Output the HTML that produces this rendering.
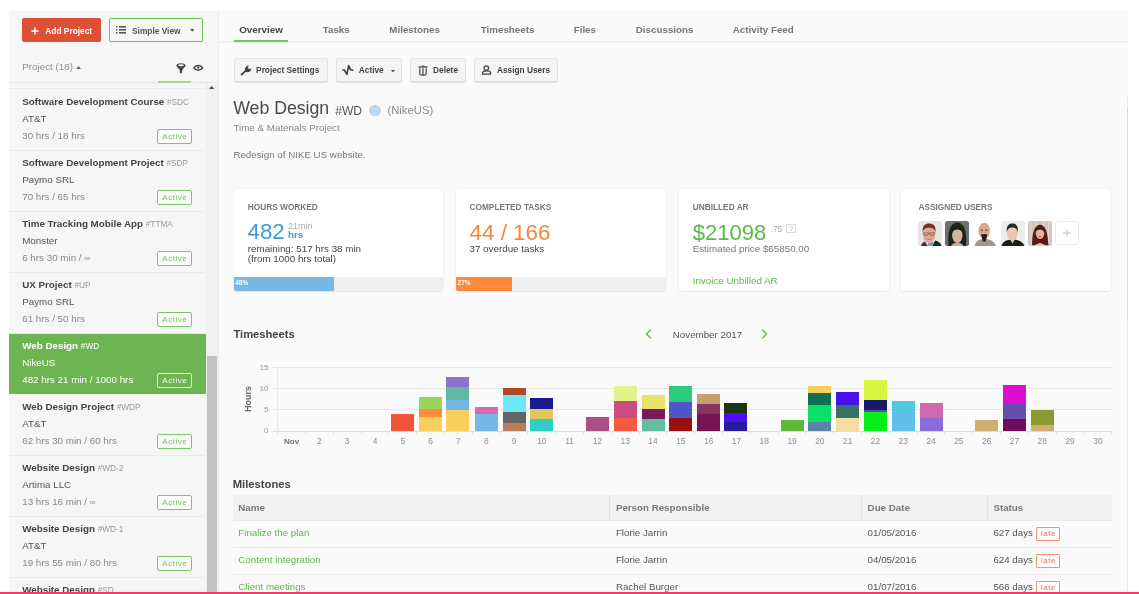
<!DOCTYPE html>
<html><head><meta charset="utf-8"><title>Paymo</title>
<style>
html,body{margin:0;padding:0;width:1139px;height:594px;overflow:hidden;background:#fff;}
body{position:relative;font-family:'Liberation Sans', sans-serif;}
#root{position:absolute;left:0;top:0;width:1139px;height:594px;will-change:transform;}
.t{position:absolute;white-space:nowrap;font-family:'Liberation Sans', sans-serif;}
</style></head><body><div id="root">
<div style="position:absolute;left:9.00px;top:11.00px;width:210.00px;height:583.00px;background:#f6f6f6;"></div>
<div style="position:absolute;left:218.00px;top:11.00px;width:1.00px;height:583.00px;background:#ececec;"></div>
<div style="position:absolute;left:22.00px;top:18.00px;width:79.00px;height:24.00px;background:#dd5035;border-radius:2px;"></div>
<svg style="position:absolute;left:30.5px;top:26.5px" width="8" height="8"><path d="M4 0.5V7.5M0.5 4H7.5" stroke="#fff" stroke-width="1.6"/></svg>
<div class="t" style="left:45.30px;top:26.50px;font-size:8.35px;line-height:8.35px;color:#fff;font-weight:bold;">Add Project</div>
<div style="position:absolute;left:108.50px;top:18.00px;width:94.50px;height:23.50px;box-sizing:border-box;border:1.8px solid #6ec254;border-radius:2px;background:#f7f7f7;"></div>
<svg style="position:absolute;left:115.5px;top:26px" width="11" height="8"><g fill="#555"><rect x="0" y="0" width="1.5" height="1.5"/><rect x="0" y="3" width="1.5" height="1.5"/><rect x="0" y="6" width="1.5" height="1.5"/><rect x="3" y="0" width="7" height="1.6"/><rect x="3" y="3" width="7" height="1.6"/><rect x="3" y="6" width="7" height="1.6"/></g></svg>
<div class="t" style="left:132.00px;top:26.50px;font-size:8.35px;line-height:8.35px;color:#555;font-weight:bold;">Simple View</div>
<svg style="position:absolute;left:189.8px;top:29.2px" width="4.5" height="3"><path d="M0 0H4.5L2.25 2.8Z" fill="#555"/></svg>
<div class="t" style="left:22.30px;top:61.97px;font-size:9.8px;line-height:9.8px;color:#8c8c8c;font-weight:normal;">Project (18)</div>
<svg style="position:absolute;left:76px;top:66px" width="5" height="3"><path d="M0 3H5L2.5 0Z" fill="#666"/></svg>
<svg style="position:absolute;left:175.5px;top:62.5px" width="10" height="11"><path d="M0.4 2.6C0.4 -0.4 9.6 -0.4 9.6 2.6C9.6 3.8 7.2 5.5 6.4 6.8L5.8 10.2L4 10.6L3.6 6.8C2.8 5.5 0.4 3.8 0.4 2.6Z" fill="#454242"/><ellipse cx="5" cy="2.3" rx="2.9" ry="0.95" fill="#f6f6f6"/></svg>
<svg style="position:absolute;left:193.2px;top:64.4px" width="10.4" height="7.6"><path d="M0.8 3.8C2.8 0.7 7.6 0.7 9.6 3.8C7.6 6.9 2.8 6.9 0.8 3.8Z" fill="none" stroke="#454242" stroke-width="1.5"/><circle cx="5.2" cy="3.7" r="1.1" fill="#454242"/></svg>
<div style="position:absolute;left:9.00px;top:81.60px;width:209.00px;height:1.60px;background:#e6e6e6;"></div>
<div style="position:absolute;left:157.60px;top:81.00px;width:33.40px;height:2.10px;background:#a9d59b;"></div>
<div style="position:absolute;left:9.00px;top:88.40px;width:197.00px;height:1.00px;background:#ececec;"></div>
<div style="position:absolute;left:206.00px;top:84.00px;width:12.00px;height:510.00px;background:#f0f0f0;"></div>
<svg style="position:absolute;left:209.4px;top:86.0px" width="5.4" height="3"><path d="M0 3H5.4L2.7 0Z" fill="#505050"/></svg>
<div style="position:absolute;left:207.00px;top:356.30px;width:10.00px;height:240.00px;background:#c1c1c1;"></div>
<div style="position:absolute;left:9.00px;top:149.90px;width:195.70px;height:1.00px;background:#e9e9e9;"></div>
<div class="t" style="left:22.20px;top:97.47px;font-size:9.8px;line-height:9.8px;color:#444;font-weight:bold;">Software Development Course <span style="font-weight:normal;font-size:8.25px;color:#999">#SDC</span></div>
<div class="t" style="left:22.20px;top:114.07px;font-size:9.8px;line-height:9.8px;color:#555;font-weight:normal;">AT&amp;T</div>
<div class="t" style="left:22.20px;top:131.17px;font-size:9.8px;line-height:9.8px;color:#888;font-weight:normal;">30 hrs / 18 hrs</div>
<div style="position:absolute;left:157.3px;top:128.90px;width:34.4px;height:14.8px;box-sizing:border-box;border:1.2px solid #7cc764;border-radius:2px;color:#72c35a;background:#fbfbfb;font:8px/14px 'Liberation Sans', sans-serif;font-weight:normal;text-align:center;letter-spacing:0.5px;text-indent:0.5px">Active</div>
<div style="position:absolute;left:9.00px;top:210.90px;width:195.70px;height:1.00px;background:#e9e9e9;"></div>
<div class="t" style="left:22.20px;top:158.47px;font-size:9.8px;line-height:9.8px;color:#444;font-weight:bold;">Software Development Project <span style="font-weight:normal;font-size:8.25px;color:#999">#SDP</span></div>
<div class="t" style="left:22.20px;top:175.07px;font-size:9.8px;line-height:9.8px;color:#555;font-weight:normal;">Paymo SRL</div>
<div class="t" style="left:22.20px;top:192.17px;font-size:9.8px;line-height:9.8px;color:#888;font-weight:normal;">70 hrs / 65 hrs</div>
<div style="position:absolute;left:157.3px;top:189.90px;width:34.4px;height:14.8px;box-sizing:border-box;border:1.2px solid #7cc764;border-radius:2px;color:#72c35a;background:#fbfbfb;font:8px/14px 'Liberation Sans', sans-serif;font-weight:normal;text-align:center;letter-spacing:0.5px;text-indent:0.5px">Active</div>
<div style="position:absolute;left:9.00px;top:271.90px;width:195.70px;height:1.00px;background:#e9e9e9;"></div>
<div class="t" style="left:22.20px;top:219.47px;font-size:9.8px;line-height:9.8px;color:#444;font-weight:bold;">Time Tracking Mobile App <span style="font-weight:normal;font-size:8.25px;color:#999">#TTMA</span></div>
<div class="t" style="left:22.20px;top:236.07px;font-size:9.8px;line-height:9.8px;color:#555;font-weight:normal;">Monster</div>
<div class="t" style="left:22.20px;top:253.17px;font-size:9.8px;line-height:9.8px;color:#888;font-weight:normal;">6 hrs 30 min / <span style="font-size:8.3px">&#8734;</span></div>
<div style="position:absolute;left:157.3px;top:250.90px;width:34.4px;height:14.8px;box-sizing:border-box;border:1.2px solid #7cc764;border-radius:2px;color:#72c35a;background:#fbfbfb;font:8px/14px 'Liberation Sans', sans-serif;font-weight:normal;text-align:center;letter-spacing:0.5px;text-indent:0.5px">Active</div>
<div style="position:absolute;left:9.00px;top:332.90px;width:195.70px;height:1.00px;background:#e9e9e9;"></div>
<div class="t" style="left:22.20px;top:280.47px;font-size:9.8px;line-height:9.8px;color:#444;font-weight:bold;">UX Project <span style="font-weight:normal;font-size:8.25px;color:#999">#UP</span></div>
<div class="t" style="left:22.20px;top:297.07px;font-size:9.8px;line-height:9.8px;color:#555;font-weight:normal;">Paymo SRL</div>
<div class="t" style="left:22.20px;top:314.17px;font-size:9.8px;line-height:9.8px;color:#888;font-weight:normal;">61 hrs / 50 hrs</div>
<div style="position:absolute;left:157.3px;top:311.90px;width:34.4px;height:14.8px;box-sizing:border-box;border:1.2px solid #7cc764;border-radius:2px;color:#72c35a;background:#fbfbfb;font:8px/14px 'Liberation Sans', sans-serif;font-weight:normal;text-align:center;letter-spacing:0.5px;text-indent:0.5px">Active</div>
<div style="position:absolute;left:9.00px;top:333.70px;width:196.70px;height:59.90px;background:#6cb552;"></div>
<div class="t" style="left:22.20px;top:341.47px;font-size:9.8px;line-height:9.8px;color:#fff;font-weight:bold;">Web Design <span style="font-weight:normal;font-size:8.25px;color:#fff">#WD</span></div>
<div class="t" style="left:22.20px;top:358.07px;font-size:9.8px;line-height:9.8px;color:#fff;font-weight:normal;">NikeUS</div>
<div class="t" style="left:22.20px;top:375.17px;font-size:9.8px;line-height:9.8px;color:#fff;font-weight:normal;">482 hrs 21 min / 1000 hrs</div>
<div style="position:absolute;left:157.3px;top:372.90px;width:34.4px;height:14.8px;box-sizing:border-box;border:1.2px solid #e4f2dc;border-radius:2px;color:#f4faf0;background:transparent;font:8px/14px 'Liberation Sans', sans-serif;font-weight:normal;text-align:center;letter-spacing:0.5px;text-indent:0.5px">Active</div>
<div style="position:absolute;left:9.00px;top:454.90px;width:195.70px;height:1.00px;background:#e9e9e9;"></div>
<div class="t" style="left:22.20px;top:402.47px;font-size:9.8px;line-height:9.8px;color:#444;font-weight:bold;">Web Design Project <span style="font-weight:normal;font-size:8.25px;color:#999">#WDP</span></div>
<div class="t" style="left:22.20px;top:419.07px;font-size:9.8px;line-height:9.8px;color:#555;font-weight:normal;">AT&amp;T</div>
<div class="t" style="left:22.20px;top:436.17px;font-size:9.8px;line-height:9.8px;color:#888;font-weight:normal;">62 hrs 30 min / 60 hrs</div>
<div style="position:absolute;left:157.3px;top:433.90px;width:34.4px;height:14.8px;box-sizing:border-box;border:1.2px solid #7cc764;border-radius:2px;color:#72c35a;background:#fbfbfb;font:8px/14px 'Liberation Sans', sans-serif;font-weight:normal;text-align:center;letter-spacing:0.5px;text-indent:0.5px">Active</div>
<div style="position:absolute;left:9.00px;top:515.90px;width:195.70px;height:1.00px;background:#e9e9e9;"></div>
<div class="t" style="left:22.20px;top:463.47px;font-size:9.8px;line-height:9.8px;color:#444;font-weight:bold;">Website Design <span style="font-weight:normal;font-size:8.25px;color:#999">#WD-2</span></div>
<div class="t" style="left:22.20px;top:480.07px;font-size:9.8px;line-height:9.8px;color:#555;font-weight:normal;">Artima LLC</div>
<div class="t" style="left:22.20px;top:497.17px;font-size:9.8px;line-height:9.8px;color:#888;font-weight:normal;">13 hrs 16 min / <span style="font-size:8.3px">&#8734;</span></div>
<div style="position:absolute;left:157.3px;top:494.90px;width:34.4px;height:14.8px;box-sizing:border-box;border:1.2px solid #7cc764;border-radius:2px;color:#72c35a;background:#fbfbfb;font:8px/14px 'Liberation Sans', sans-serif;font-weight:normal;text-align:center;letter-spacing:0.5px;text-indent:0.5px">Active</div>
<div style="position:absolute;left:9.00px;top:576.90px;width:195.70px;height:1.00px;background:#e9e9e9;"></div>
<div class="t" style="left:22.20px;top:524.47px;font-size:9.8px;line-height:9.8px;color:#444;font-weight:bold;">Website Design <span style="font-weight:normal;font-size:8.25px;color:#999">#WD-1</span></div>
<div class="t" style="left:22.20px;top:541.07px;font-size:9.8px;line-height:9.8px;color:#555;font-weight:normal;">AT&amp;T</div>
<div class="t" style="left:22.20px;top:558.17px;font-size:9.8px;line-height:9.8px;color:#888;font-weight:normal;">19 hrs 55 min / 80 hrs</div>
<div style="position:absolute;left:157.3px;top:555.90px;width:34.4px;height:14.8px;box-sizing:border-box;border:1.2px solid #7cc764;border-radius:2px;color:#72c35a;background:#fbfbfb;font:8px/14px 'Liberation Sans', sans-serif;font-weight:normal;text-align:center;letter-spacing:0.5px;text-indent:0.5px">Active</div>
<div style="position:absolute;left:9.00px;top:637.90px;width:195.70px;height:1.00px;background:#e9e9e9;"></div>
<div class="t" style="left:22.20px;top:585.47px;font-size:9.8px;line-height:9.8px;color:#444;font-weight:bold;">Website Design <span style="font-weight:normal;font-size:8.25px;color:#999">#SD</span></div>
<div style="position:absolute;left:219.00px;top:11.00px;width:909.00px;height:583.00px;background:#fafafa;"></div>
<div style="position:absolute;left:1126.50px;top:95.60px;width:1.50px;height:498.40px;background:#eeeeee;"></div>
<div style="position:absolute;left:1126.50px;top:106.80px;width:1.50px;height:212.60px;background:#d9d9d9;"></div>
<div style="position:absolute;left:219.00px;top:41.00px;width:909.00px;height:1.60px;background:#efefef;"></div>
<div class="t" style="left:239.20px;top:25.47px;font-size:9.8px;line-height:9.8px;color:#444;font-weight:bold;">Overview</div>
<div class="t" style="left:322.70px;top:25.47px;font-size:9.8px;line-height:9.8px;color:#777;font-weight:bold;">Tasks</div>
<div class="t" style="left:389.30px;top:25.47px;font-size:9.8px;line-height:9.8px;color:#777;font-weight:bold;">Milestones</div>
<div class="t" style="left:480.70px;top:25.47px;font-size:9.8px;line-height:9.8px;color:#777;font-weight:bold;">Timesheets</div>
<div class="t" style="left:573.70px;top:25.47px;font-size:9.8px;line-height:9.8px;color:#777;font-weight:bold;">Files</div>
<div class="t" style="left:635.80px;top:25.47px;font-size:9.8px;line-height:9.8px;color:#777;font-weight:bold;">Discussions</div>
<div class="t" style="left:732.80px;top:25.47px;font-size:9.8px;line-height:9.8px;color:#777;font-weight:bold;">Activity Feed</div>
<div style="position:absolute;left:234.30px;top:40.00px;width:53.40px;height:2.10px;background:#74c35c;"></div>
<div style="position:absolute;left:233.50px;top:58.30px;width:94.10px;height:23.70px;box-sizing:border-box;background:#f4f4f4;border:1px solid #e4e4e4;border-radius:2px;box-shadow:0 1px 0 #e0e0e0;"></div>
<div class="t" style="left:256.10px;top:66.34px;font-size:8.3px;line-height:8.3px;color:#444;font-weight:bold;">Project Settings</div>
<svg style="position:absolute;left:239.5px;top:63.5px" width="12" height="12"><path d="M1.6 10.6L5.8 6.6" stroke="#454242" stroke-width="1.9" stroke-linecap="round"/><path d="M5.2 7.2C4.4 5.2 5.4 2.2 8.3 1.6L8.7 1.8L7.7 3.7L9.3 5.3L11.2 4.5C11.5 7 8.8 8.9 6.3 8.1Z" fill="#454242"/></svg>
<div style="position:absolute;left:335.80px;top:58.30px;width:66.00px;height:23.70px;box-sizing:border-box;background:#f4f4f4;border:1px solid #e4e4e4;border-radius:2px;box-shadow:0 1px 0 #e0e0e0;"></div>
<div class="t" style="left:358.80px;top:66.34px;font-size:8.3px;line-height:8.3px;color:#444;font-weight:bold;">Active</div>
<svg style="position:absolute;left:342px;top:64px" width="12" height="12"><path d="M0.8 6H2.4L5 10.4L6.6 1.6L8.6 5.8L10.8 6.3" fill="none" stroke="#454242" stroke-width="1.6" stroke-linejoin="round" stroke-linecap="round"/></svg><svg style="position:absolute;left:390.8px;top:69.6px" width="4" height="2.5"><path d="M0 0H4L2 2.5Z" fill="#555"/></svg>
<div style="position:absolute;left:409.70px;top:58.30px;width:56.00px;height:23.70px;box-sizing:border-box;background:#f4f4f4;border:1px solid #e4e4e4;border-radius:2px;box-shadow:0 1px 0 #e0e0e0;"></div>
<div class="t" style="left:433.10px;top:66.34px;font-size:8.3px;line-height:8.3px;color:#444;font-weight:bold;">Delete</div>
<svg style="position:absolute;left:417.5px;top:64.5px" width="10.5" height="11"><path d="M0.5 2H9.5" stroke="#454242" stroke-width="1.3"/><path d="M3.6 1.1H6.4" stroke="#454242" stroke-width="1.1"/><path d="M1.8 3.2V8.6Q1.8 10.1 3.4 10.1H6.6Q8.2 10.1 8.2 8.6V3.2M5 3.2V10" fill="none" stroke="#454242" stroke-width="1.2"/></svg>
<div style="position:absolute;left:473.90px;top:58.30px;width:83.90px;height:23.70px;box-sizing:border-box;background:#f4f4f4;border:1px solid #e4e4e4;border-radius:2px;box-shadow:0 1px 0 #e0e0e0;"></div>
<div class="t" style="left:497.00px;top:66.34px;font-size:8.3px;line-height:8.3px;color:#444;font-weight:bold;">Assign Users</div>
<svg style="position:absolute;left:481px;top:64px" width="11" height="11"><circle cx="5.3" cy="4.1" r="2.3" fill="none" stroke="#454242" stroke-width="1.3"/><path d="M1.5 10.2V9C1.5 7.6 3.3 6.9 5.5 6.9C7.7 6.9 9.6 7.6 9.6 9V10.2Z" fill="none" stroke="#454242" stroke-width="1.3" stroke-linejoin="round"/></svg>
<div class="t" style="left:233.20px;top:100.05px;font-size:17.7px;line-height:17.7px;color:#4a4a4a;font-weight:normal;">Web Design</div>
<div class="t" style="left:335.20px;top:104.72px;font-size:12.1px;line-height:12.1px;color:#555;font-weight:normal;">#WD</div>
<div style="position:absolute;left:369.4px;top:104.5px;width:11.2px;height:11.2px;border-radius:50%;background:#bcd6ef"></div>
<div class="t" style="left:387.40px;top:105.19px;font-size:11.3px;line-height:11.3px;color:#8a8a8a;font-weight:normal;">(NikeUS)</div>
<div class="t" style="left:233.40px;top:122.77px;font-size:9.8px;line-height:9.8px;color:#8a8a8a;font-weight:normal;">Time &amp; Materials Project</div>
<div class="t" style="left:233.40px;top:150.01px;font-size:9.75px;line-height:9.75px;color:#777;font-weight:normal;">Redesign of NIKE US website.</div>
<div style="position:absolute;left:233.70px;top:189.00px;width:209.10px;height:101.90px;background:#fff;border-radius:2px;box-shadow:0 0 1.5px rgba(0,0,0,0.13),0 1px 1.5px rgba(0,0,0,0.06);"></div>
<div style="position:absolute;left:456.00px;top:189.00px;width:209.90px;height:101.90px;background:#fff;border-radius:2px;box-shadow:0 0 1.5px rgba(0,0,0,0.13),0 1px 1.5px rgba(0,0,0,0.06);"></div>
<div style="position:absolute;left:678.70px;top:189.00px;width:210.30px;height:101.90px;background:#fff;border-radius:2px;box-shadow:0 0 1.5px rgba(0,0,0,0.13),0 1px 1.5px rgba(0,0,0,0.06);"></div>
<div style="position:absolute;left:900.90px;top:189.00px;width:210.20px;height:101.90px;background:#fff;border-radius:2px;box-shadow:0 0 1.5px rgba(0,0,0,0.13),0 1px 1.5px rgba(0,0,0,0.06);"></div>
<div class="t" style="left:247.80px;top:202.94px;font-size:8.3px;line-height:8.3px;color:#777;font-weight:bold;">HOURS WORKED</div>
<div class="t" style="left:247.50px;top:221.34px;font-size:22.3px;line-height:22.3px;color:#3c9be0;font-weight:normal;">482</div>
<div class="t" style="left:288.00px;top:222.05px;font-size:9.0px;line-height:9.0px;color:#aaa;font-weight:normal;">21min</div>
<div class="t" style="left:288.00px;top:230.30px;font-size:9.77px;line-height:9.77px;color:#3c9be0;font-weight:bold;">hrs</div>
<div class="t" style="left:247.80px;top:243.57px;font-size:9.8px;line-height:9.8px;color:#444;font-weight:normal;">remaining: 517 hrs 38 min</div>
<div class="t" style="left:247.80px;top:254.37px;font-size:9.8px;line-height:9.8px;color:#444;font-weight:normal;">(from 1000 hrs total)</div>
<div style="position:absolute;left:233.70px;top:276.90px;width:209.10px;height:14.00px;background:#eef0f0;border-radius:0 0 2px 2px;"></div>
<div style="position:absolute;left:233.70px;top:276.90px;width:100.30px;height:14.00px;background:#77b9e4;border-radius:0 0 0 2px;"></div>
<div class="t" style="left:235.20px;top:280.48px;font-size:6.5px;line-height:6.5px;color:#fff;font-weight:bold;">48%</div>
<div class="t" style="left:469.50px;top:202.94px;font-size:8.3px;line-height:8.3px;color:#777;font-weight:bold;">COMPLETED TASKS</div>
<div class="t" style="left:469.50px;top:221.86px;font-size:22.4px;line-height:22.4px;color:#f5883a;font-weight:normal;">44 / 166</div>
<div class="t" style="left:469.50px;top:243.57px;font-size:9.8px;line-height:9.8px;color:#444;font-weight:normal;">37 overdue tasks</div>
<div style="position:absolute;left:456.00px;top:276.90px;width:209.90px;height:14.00px;background:#eef0f0;border-radius:0 0 2px 2px;"></div>
<div style="position:absolute;left:456.00px;top:276.90px;width:56.30px;height:14.00px;background:#fd8a3c;border-radius:0 0 0 2px;"></div>
<div class="t" style="left:457.60px;top:280.48px;font-size:6.5px;line-height:6.5px;color:#fff;font-weight:bold;">27%</div>
<div class="t" style="left:692.70px;top:202.94px;font-size:8.3px;line-height:8.3px;color:#777;font-weight:bold;">UNBILLED AR</div>
<div class="t" style="left:692.70px;top:222.22px;font-size:22.1px;line-height:22.1px;color:#5db84a;font-weight:normal;">$21098</div>
<div class="t" style="left:770.60px;top:225.99px;font-size:8.25px;line-height:8.25px;color:#aaa;font-weight:normal;">.75</div>
<div style="position:absolute;left:786.4px;top:223.8px;width:9.5px;height:9px;box-sizing:border-box;border:1px solid #ddd;font:7px/7px 'Liberation Sans', sans-serif;color:#aaa;text-align:center">?</div>
<div class="t" style="left:692.70px;top:243.57px;font-size:9.8px;line-height:9.8px;color:#777;font-weight:normal;">Estimated price $65850.00</div>
<div class="t" style="left:692.70px;top:275.87px;font-size:9.8px;line-height:9.8px;color:#5db84a;font-weight:normal;">Invoice Unbilled AR</div>
<div class="t" style="left:918.40px;top:202.94px;font-size:8.3px;line-height:8.3px;color:#777;font-weight:bold;">ASSIGNED USERS</div>
<svg style="position:absolute;left:918.2px;top:220.6px" width="24" height="25" viewBox="0 0 24 25"><rect width="24" height="25" rx="2.5" fill="#e6e6e6"/><path d="M9 25L11 21H15L16 25Z" fill="#8a98c8"/><path d="M14.5 25L17 19.5C20 20 22.5 21.5 23.5 25Z" fill="#1c2a1c"/><path d="M9.5 25L7 20.5C5 21 3.5 22.5 3 25Z" fill="#3a3a3a"/><ellipse cx="11" cy="13.3" rx="6.2" ry="8.6" fill="#e2a890"/><path d="M4.6 11.5C4 4.2 7.5 2.4 11 2.4C15 2.4 18.2 4.2 17.5 11.5C17 8 14.5 6.8 11 6.8C7.8 6.8 5.2 8 4.6 11.5Z" fill="#6a3428"/><path d="M4.8 12H17.2M5.6 12Q5.6 14.8 8.2 14.8Q10.4 14.8 10.6 12M11.4 12Q11.6 14.8 14 14.8Q16.6 14.8 16.6 12" fill="none" stroke="#94604a" stroke-width="0.9"/><path d="M8.5 17.8Q11 19.5 13.5 17.8" stroke="#c07070" stroke-width="0.8" fill="none"/></svg>
<svg style="position:absolute;left:945.4px;top:220.6px" width="24" height="25" viewBox="0 0 24 25"><rect width="24" height="25" rx="2.5" fill="#6e6e6e"/><path d="M3.5 25C2.5 13 4 2 12.3 1.5C20.5 2 22 13 21 25Z" fill="#1c2616"/><path d="M6 25C7 22.5 9.5 22 12.3 22C15 22 17.5 22.5 18.5 25Z" fill="#b8b0b0"/><ellipse cx="12.3" cy="14.3" rx="5.2" ry="7.8" fill="#d8b2a0"/><path d="M6.8 12.5C7 7 9.5 5.8 12.3 5.8C15.5 5.8 17.8 7.5 18 12.5C16.5 9.2 14 8.4 12.3 8.4C10.5 8.4 8.2 9.2 6.8 12.5Z" fill="#1c2616"/></svg>
<svg style="position:absolute;left:974.0px;top:220.6px" width="24" height="25" viewBox="0 0 24 25"><rect width="24" height="25" rx="2.5" fill="#ffffff"/><path d="M0.5 25C1.5 20.5 5 18 10.5 18C16 18 20.5 20.5 22 25Z" fill="#a4968a"/><path d="M8 16H13V19.5H8Z" fill="#c8987c"/><ellipse cx="10.2" cy="9.6" rx="5.7" ry="7.9" fill="#dca68c"/><path d="M7 13.6Q10.2 12.4 13.4 13.6L12.6 16.5L11.6 20.5H8.8L7.8 16.5Z" fill="#2a2018"/><path d="M6.8 9.2H8.8M11.4 9.2H13.4" stroke="#4a3024" stroke-width="1"/></svg>
<svg style="position:absolute;left:1000.8px;top:220.6px" width="24" height="25" viewBox="0 0 24 25"><rect width="24" height="25" rx="2.5" fill="#eceeee"/><path d="M0.5 25C1.5 20.5 6 18.5 11.5 18.5C17 18.5 21.5 20.5 23.5 25Z" fill="#162014"/><path d="M9 18.3L11.5 22.5L14 18.3Z" fill="#e4c0a8"/><ellipse cx="11.3" cy="12.3" rx="5.4" ry="7.2" fill="#e8c6b0"/><path d="M5.8 11.5C5 4.5 8.2 2.5 11.3 2.5C14.8 2.5 17.5 4.5 16.8 11.5C16.3 7.8 14.2 6.6 11.3 6.6C8.7 6.6 6.4 7.8 5.8 11.5Z" fill="#2a2624"/></svg>
<svg style="position:absolute;left:1027.6px;top:220.6px" width="24" height="25" viewBox="0 0 24 25"><rect width="24" height="25" rx="2.5" fill="#d6c6ba"/><path d="M2.5 0H3.5V25H2.5ZM8 0H9V25H8ZM15 0H16V25H15ZM20 0H21V25H20Z" fill="#e8dcd2"/><path d="M4 24C4.5 15 4.5 5.5 12 3.5C19.5 5 19.5 15 20.5 24C18 25 15 23 12 22C9 23 6 25 4 24Z" fill="#561c1c"/><path d="M8.5 25C9.5 23 10.5 22.5 12 22.5C13.5 22.5 14.5 23 15.5 25Z" fill="#e0cfc4"/><ellipse cx="12" cy="12" rx="4.3" ry="6" fill="#e2b6a2"/><path d="M10.6 15.5H13.2" stroke="#e04030" stroke-width="1.1"/><path d="M7.4 11.5C7.6 7 10 6 12 6C14.5 6 16.4 7.5 16.5 11.5C15 9 13 8.4 12 8.4C10.5 8.4 8.6 9 7.4 11.5Z" fill="#3a1616"/></svg>
<div style="position:absolute;left:1055.1px;top:220.7px;width:24.3px;height:24.8px;box-sizing:border-box;border:1.5px solid #ececec;border-radius:3px;background:#fff"></div>
<svg style="position:absolute;left:1063.1px;top:228.7px" width="8" height="8"><path d="M4 0.2V7.8M0.2 4H7.8" stroke="#d2d2d2" stroke-width="1.3"/></svg>
<div class="t" style="left:233.40px;top:328.88px;font-size:11.2px;line-height:11.2px;color:#444;font-weight:bold;">Timesheets</div>
<svg style="position:absolute;left:645px;top:329px" width="7" height="10"><path d="M5.8 0.8L1.5 5L5.8 9.2" fill="none" stroke="#6cbf4c" stroke-width="1.6"/></svg>
<div class="t" style="left:672.80px;top:329.61px;font-size:9.75px;line-height:9.75px;color:#555;font-weight:normal;">November 2017</div>
<svg style="position:absolute;left:761px;top:329px" width="7" height="10"><path d="M1.2 0.8L5.5 5L1.2 9.2" fill="none" stroke="#6cbf4c" stroke-width="1.6"/></svg>
<div style="position:absolute;left:273.00px;top:409.47px;width:838.80px;height:1.00px;background:#e8e8e8;"></div>
<div style="position:absolute;left:273.00px;top:388.43px;width:838.80px;height:1.00px;background:#e8e8e8;"></div>
<div style="position:absolute;left:273.00px;top:367.40px;width:838.80px;height:1.00px;background:#e8e8e8;"></div>
<div style="position:absolute;left:277.20px;top:367.30px;width:1.00px;height:64.00px;background:#e8e8e8;"></div>
<div style="position:absolute;left:273.00px;top:430.50px;width:838.80px;height:1.30px;background:#dcdcdc;"></div>
<div style="position:absolute;left:277.20px;top:431.30px;width:1.00px;height:3.20px;background:#e2e2e2;"></div>
<div style="position:absolute;left:305.00px;top:431.30px;width:1.00px;height:3.20px;background:#e2e2e2;"></div>
<div style="position:absolute;left:332.81px;top:431.30px;width:1.00px;height:3.20px;background:#e2e2e2;"></div>
<div style="position:absolute;left:360.61px;top:431.30px;width:1.00px;height:3.20px;background:#e2e2e2;"></div>
<div style="position:absolute;left:388.41px;top:431.30px;width:1.00px;height:3.20px;background:#e2e2e2;"></div>
<div style="position:absolute;left:416.22px;top:431.30px;width:1.00px;height:3.20px;background:#e2e2e2;"></div>
<div style="position:absolute;left:444.02px;top:431.30px;width:1.00px;height:3.20px;background:#e2e2e2;"></div>
<div style="position:absolute;left:471.82px;top:431.30px;width:1.00px;height:3.20px;background:#e2e2e2;"></div>
<div style="position:absolute;left:499.63px;top:431.30px;width:1.00px;height:3.20px;background:#e2e2e2;"></div>
<div style="position:absolute;left:527.43px;top:431.30px;width:1.00px;height:3.20px;background:#e2e2e2;"></div>
<div style="position:absolute;left:555.23px;top:431.30px;width:1.00px;height:3.20px;background:#e2e2e2;"></div>
<div style="position:absolute;left:583.04px;top:431.30px;width:1.00px;height:3.20px;background:#e2e2e2;"></div>
<div style="position:absolute;left:610.84px;top:431.30px;width:1.00px;height:3.20px;background:#e2e2e2;"></div>
<div style="position:absolute;left:638.64px;top:431.30px;width:1.00px;height:3.20px;background:#e2e2e2;"></div>
<div style="position:absolute;left:666.45px;top:431.30px;width:1.00px;height:3.20px;background:#e2e2e2;"></div>
<div style="position:absolute;left:694.25px;top:431.30px;width:1.00px;height:3.20px;background:#e2e2e2;"></div>
<div style="position:absolute;left:722.05px;top:431.30px;width:1.00px;height:3.20px;background:#e2e2e2;"></div>
<div style="position:absolute;left:749.86px;top:431.30px;width:1.00px;height:3.20px;background:#e2e2e2;"></div>
<div style="position:absolute;left:777.66px;top:431.30px;width:1.00px;height:3.20px;background:#e2e2e2;"></div>
<div style="position:absolute;left:805.46px;top:431.30px;width:1.00px;height:3.20px;background:#e2e2e2;"></div>
<div style="position:absolute;left:833.27px;top:431.30px;width:1.00px;height:3.20px;background:#e2e2e2;"></div>
<div style="position:absolute;left:861.07px;top:431.30px;width:1.00px;height:3.20px;background:#e2e2e2;"></div>
<div style="position:absolute;left:888.87px;top:431.30px;width:1.00px;height:3.20px;background:#e2e2e2;"></div>
<div style="position:absolute;left:916.68px;top:431.30px;width:1.00px;height:3.20px;background:#e2e2e2;"></div>
<div style="position:absolute;left:944.48px;top:431.30px;width:1.00px;height:3.20px;background:#e2e2e2;"></div>
<div style="position:absolute;left:972.28px;top:431.30px;width:1.00px;height:3.20px;background:#e2e2e2;"></div>
<div style="position:absolute;left:1000.09px;top:431.30px;width:1.00px;height:3.20px;background:#e2e2e2;"></div>
<div style="position:absolute;left:1027.89px;top:431.30px;width:1.00px;height:3.20px;background:#e2e2e2;"></div>
<div style="position:absolute;left:1055.69px;top:431.30px;width:1.00px;height:3.20px;background:#e2e2e2;"></div>
<div style="position:absolute;left:1083.50px;top:431.30px;width:1.00px;height:3.20px;background:#e2e2e2;"></div>
<div style="position:absolute;left:1111.30px;top:431.30px;width:1.00px;height:3.20px;background:#e2e2e2;"></div>
<div class="t" style="right:870.50px;top:427.01px;font-size:8.1px;line-height:8.1px;color:#999;font-weight:normal;">0</div>
<div class="t" style="right:870.50px;top:405.98px;font-size:8.1px;line-height:8.1px;color:#999;font-weight:normal;">5</div>
<div class="t" style="right:870.50px;top:384.95px;font-size:8.1px;line-height:8.1px;color:#999;font-weight:normal;">10</div>
<div class="t" style="right:870.50px;top:363.91px;font-size:8.1px;line-height:8.1px;color:#999;font-weight:normal;">15</div>
<div class="t" style="left:218.3px;top:394.4px;width:60px;height:10px;text-align:center;font-size:8.9px;line-height:10px;font-weight:bold;color:#666;transform:rotate(-90deg)">Hours</div>
<div class="t" style="left:91.60px;width:400px;text-align:center;top:437.51px;font-size:8.1px;line-height:8.1px;color:#707070;font-weight:bold;">Nov</div>
<div class="t" style="left:119.40px;width:400px;text-align:center;top:437.26px;font-size:8.4px;line-height:8.4px;color:#8f8f8f;font-weight:normal;">2</div>
<div class="t" style="left:147.21px;width:400px;text-align:center;top:437.26px;font-size:8.4px;line-height:8.4px;color:#8f8f8f;font-weight:normal;">3</div>
<div class="t" style="left:175.01px;width:400px;text-align:center;top:437.26px;font-size:8.4px;line-height:8.4px;color:#8f8f8f;font-weight:normal;">4</div>
<div class="t" style="left:202.81px;width:400px;text-align:center;top:437.26px;font-size:8.4px;line-height:8.4px;color:#8f8f8f;font-weight:normal;">5</div>
<div class="t" style="left:230.62px;width:400px;text-align:center;top:437.26px;font-size:8.4px;line-height:8.4px;color:#8f8f8f;font-weight:normal;">6</div>
<div class="t" style="left:258.42px;width:400px;text-align:center;top:437.26px;font-size:8.4px;line-height:8.4px;color:#8f8f8f;font-weight:normal;">7</div>
<div class="t" style="left:286.22px;width:400px;text-align:center;top:437.26px;font-size:8.4px;line-height:8.4px;color:#8f8f8f;font-weight:normal;">8</div>
<div class="t" style="left:314.03px;width:400px;text-align:center;top:437.26px;font-size:8.4px;line-height:8.4px;color:#8f8f8f;font-weight:normal;">9</div>
<div class="t" style="left:341.83px;width:400px;text-align:center;top:437.26px;font-size:8.4px;line-height:8.4px;color:#8f8f8f;font-weight:normal;">10</div>
<div class="t" style="left:369.63px;width:400px;text-align:center;top:437.26px;font-size:8.4px;line-height:8.4px;color:#8f8f8f;font-weight:normal;">11</div>
<div class="t" style="left:397.44px;width:400px;text-align:center;top:437.26px;font-size:8.4px;line-height:8.4px;color:#8f8f8f;font-weight:normal;">12</div>
<div class="t" style="left:425.24px;width:400px;text-align:center;top:437.26px;font-size:8.4px;line-height:8.4px;color:#8f8f8f;font-weight:normal;">13</div>
<div class="t" style="left:453.04px;width:400px;text-align:center;top:437.26px;font-size:8.4px;line-height:8.4px;color:#8f8f8f;font-weight:normal;">14</div>
<div class="t" style="left:480.85px;width:400px;text-align:center;top:437.26px;font-size:8.4px;line-height:8.4px;color:#8f8f8f;font-weight:normal;">15</div>
<div class="t" style="left:508.65px;width:400px;text-align:center;top:437.26px;font-size:8.4px;line-height:8.4px;color:#8f8f8f;font-weight:normal;">16</div>
<div class="t" style="left:536.45px;width:400px;text-align:center;top:437.26px;font-size:8.4px;line-height:8.4px;color:#8f8f8f;font-weight:normal;">17</div>
<div class="t" style="left:564.26px;width:400px;text-align:center;top:437.26px;font-size:8.4px;line-height:8.4px;color:#8f8f8f;font-weight:normal;">18</div>
<div class="t" style="left:592.06px;width:400px;text-align:center;top:437.26px;font-size:8.4px;line-height:8.4px;color:#8f8f8f;font-weight:normal;">19</div>
<div class="t" style="left:619.87px;width:400px;text-align:center;top:437.26px;font-size:8.4px;line-height:8.4px;color:#8f8f8f;font-weight:normal;">20</div>
<div class="t" style="left:647.67px;width:400px;text-align:center;top:437.26px;font-size:8.4px;line-height:8.4px;color:#8f8f8f;font-weight:normal;">21</div>
<div class="t" style="left:675.47px;width:400px;text-align:center;top:437.26px;font-size:8.4px;line-height:8.4px;color:#8f8f8f;font-weight:normal;">22</div>
<div class="t" style="left:703.27px;width:400px;text-align:center;top:437.26px;font-size:8.4px;line-height:8.4px;color:#8f8f8f;font-weight:normal;">23</div>
<div class="t" style="left:731.08px;width:400px;text-align:center;top:437.26px;font-size:8.4px;line-height:8.4px;color:#8f8f8f;font-weight:normal;">24</div>
<div class="t" style="left:758.88px;width:400px;text-align:center;top:437.26px;font-size:8.4px;line-height:8.4px;color:#8f8f8f;font-weight:normal;">25</div>
<div class="t" style="left:786.68px;width:400px;text-align:center;top:437.26px;font-size:8.4px;line-height:8.4px;color:#8f8f8f;font-weight:normal;">26</div>
<div class="t" style="left:814.49px;width:400px;text-align:center;top:437.26px;font-size:8.4px;line-height:8.4px;color:#8f8f8f;font-weight:normal;">27</div>
<div class="t" style="left:842.29px;width:400px;text-align:center;top:437.26px;font-size:8.4px;line-height:8.4px;color:#8f8f8f;font-weight:normal;">28</div>
<div class="t" style="left:870.10px;width:400px;text-align:center;top:437.26px;font-size:8.4px;line-height:8.4px;color:#8f8f8f;font-weight:normal;">29</div>
<div class="t" style="left:897.90px;width:400px;text-align:center;top:437.26px;font-size:8.4px;line-height:8.4px;color:#8f8f8f;font-weight:normal;">30</div>
<div style="position:absolute;left:390.90px;top:414.10px;width:23.00px;height:16.90px;background:#f0553a;"></div>
<div style="position:absolute;left:418.60px;top:416.70px;width:23.00px;height:14.30px;background:#f8cf5c;"></div>
<div style="position:absolute;left:418.60px;top:408.60px;width:23.00px;height:8.10px;background:#fd8b3e;"></div>
<div style="position:absolute;left:418.60px;top:397.00px;width:23.00px;height:11.60px;background:#98d45a;"></div>
<div style="position:absolute;left:446.40px;top:409.70px;width:23.00px;height:21.30px;background:#f8cf5c;"></div>
<div style="position:absolute;left:446.40px;top:399.90px;width:23.00px;height:9.80px;background:#74b9e6;"></div>
<div style="position:absolute;left:446.40px;top:386.90px;width:23.00px;height:13.00px;background:#62b8a0;"></div>
<div style="position:absolute;left:446.40px;top:377.20px;width:23.00px;height:9.70px;background:#8e70d0;"></div>
<div style="position:absolute;left:474.50px;top:414.00px;width:23.00px;height:17.00px;background:#74b9e6;"></div>
<div style="position:absolute;left:474.50px;top:407.00px;width:23.00px;height:7.00px;background:#d86ab3;"></div>
<div style="position:absolute;left:502.60px;top:422.90px;width:23.00px;height:8.10px;background:#b97c5c;"></div>
<div style="position:absolute;left:502.60px;top:412.00px;width:23.00px;height:10.90px;background:#646464;"></div>
<div style="position:absolute;left:502.60px;top:395.10px;width:23.00px;height:16.90px;background:#6de8f7;"></div>
<div style="position:absolute;left:502.60px;top:387.70px;width:23.00px;height:7.40px;background:#b3472c;"></div>
<div style="position:absolute;left:530.10px;top:419.00px;width:23.00px;height:12.00px;background:#2ecfc7;"></div>
<div style="position:absolute;left:530.10px;top:408.60px;width:23.00px;height:10.40px;background:#e0c95a;"></div>
<div style="position:absolute;left:530.10px;top:398.10px;width:23.00px;height:10.50px;background:#1a1a8a;"></div>
<div style="position:absolute;left:585.50px;top:417.20px;width:23.00px;height:13.80px;background:#a84f86;"></div>
<div style="position:absolute;left:613.50px;top:418.10px;width:23.00px;height:12.90px;background:#f55a3c;"></div>
<div style="position:absolute;left:613.50px;top:401.40px;width:23.00px;height:16.70px;background:#c84f80;"></div>
<div style="position:absolute;left:613.50px;top:386.00px;width:23.00px;height:15.40px;background:#e3f28a;"></div>
<div style="position:absolute;left:641.60px;top:419.00px;width:23.00px;height:12.00px;background:#65bca0;"></div>
<div style="position:absolute;left:641.60px;top:408.60px;width:23.00px;height:10.40px;background:#7a1a5a;"></div>
<div style="position:absolute;left:641.60px;top:395.10px;width:23.00px;height:13.50px;background:#e8e26a;"></div>
<div style="position:absolute;left:668.90px;top:418.10px;width:23.00px;height:12.90px;background:#9a1010;"></div>
<div style="position:absolute;left:668.90px;top:402.10px;width:23.00px;height:16.00px;background:#5055c8;"></div>
<div style="position:absolute;left:668.90px;top:386.00px;width:23.00px;height:16.10px;background:#2ecb7e;"></div>
<div style="position:absolute;left:697.00px;top:414.10px;width:23.00px;height:16.90px;background:#751550;"></div>
<div style="position:absolute;left:697.00px;top:404.20px;width:23.00px;height:9.90px;background:#8a3560;"></div>
<div style="position:absolute;left:697.00px;top:394.10px;width:23.00px;height:10.10px;background:#c8a070;"></div>
<div style="position:absolute;left:724.20px;top:422.30px;width:23.00px;height:8.70px;background:#2a1aa0;"></div>
<div style="position:absolute;left:724.20px;top:412.70px;width:23.00px;height:9.60px;background:#4a10f0;"></div>
<div style="position:absolute;left:724.20px;top:402.80px;width:23.00px;height:9.90px;background:#1e3514;"></div>
<div style="position:absolute;left:780.70px;top:420.20px;width:23.00px;height:10.80px;background:#5fb83a;"></div>
<div style="position:absolute;left:807.90px;top:422.30px;width:23.00px;height:8.70px;background:#5e82a8;"></div>
<div style="position:absolute;left:807.90px;top:405.30px;width:23.00px;height:17.00px;background:#0ae068;"></div>
<div style="position:absolute;left:807.90px;top:393.00px;width:23.00px;height:12.30px;background:#0e7050;"></div>
<div style="position:absolute;left:807.90px;top:385.80px;width:23.00px;height:7.20px;background:#f7cf5a;"></div>
<div style="position:absolute;left:836.00px;top:418.10px;width:23.00px;height:12.90px;background:#f5dca0;"></div>
<div style="position:absolute;left:836.00px;top:404.60px;width:23.00px;height:13.50px;background:#3a7060;"></div>
<div style="position:absolute;left:836.00px;top:392.00px;width:23.00px;height:12.60px;background:#4a10f0;"></div>
<div style="position:absolute;left:863.60px;top:411.80px;width:23.00px;height:19.20px;background:#08ee1a;"></div>
<div style="position:absolute;left:863.60px;top:410.40px;width:23.00px;height:1.40px;background:#5a4aa0;"></div>
<div style="position:absolute;left:863.60px;top:400.00px;width:23.00px;height:10.40px;background:#1a1a6a;"></div>
<div style="position:absolute;left:863.60px;top:380.20px;width:23.00px;height:19.80px;background:#d8f540;"></div>
<div style="position:absolute;left:891.70px;top:412.30px;width:23.00px;height:18.70px;background:#62c0e8;"></div>
<div style="position:absolute;left:891.70px;top:401.30px;width:23.00px;height:11.00px;background:#4ec9e0;"></div>
<div style="position:absolute;left:919.80px;top:418.00px;width:23.00px;height:13.00px;background:#8a6ddc;"></div>
<div style="position:absolute;left:919.80px;top:402.80px;width:23.00px;height:15.20px;background:#d06ab0;"></div>
<div style="position:absolute;left:975.40px;top:420.40px;width:23.00px;height:10.60px;background:#cfae70;"></div>
<div style="position:absolute;left:1003.10px;top:418.90px;width:23.00px;height:12.10px;background:#700a5a;"></div>
<div style="position:absolute;left:1003.10px;top:404.20px;width:23.00px;height:14.70px;background:#6250aa;"></div>
<div style="position:absolute;left:1003.10px;top:384.50px;width:23.00px;height:19.70px;background:#e00dd0;"></div>
<div style="position:absolute;left:1030.90px;top:425.40px;width:23.00px;height:5.60px;background:#cfae70;"></div>
<div style="position:absolute;left:1030.90px;top:409.50px;width:23.00px;height:15.90px;background:#8a9a35;"></div>
<div class="t" style="left:232.70px;top:479.24px;font-size:11.25px;line-height:11.25px;color:#444;font-weight:bold;">Milestones</div>
<div style="position:absolute;left:232.70px;top:495.40px;width:879.30px;height:24.60px;background:#f2f2f2;"></div>
<div style="position:absolute;left:609.10px;top:495.40px;width:1.00px;height:24.60px;background:#e4e4e4;"></div>
<div style="position:absolute;left:860.90px;top:495.40px;width:1.00px;height:24.60px;background:#e4e4e4;"></div>
<div style="position:absolute;left:987.00px;top:495.40px;width:1.00px;height:24.60px;background:#e4e4e4;"></div>
<div style="position:absolute;left:232.70px;top:519.50px;width:879.30px;height:1.00px;background:#ebebeb;"></div>
<div style="position:absolute;left:232.70px;top:546.70px;width:879.30px;height:1.00px;background:#ebebeb;"></div>
<div style="position:absolute;left:232.70px;top:573.90px;width:879.30px;height:1.00px;background:#ebebeb;"></div>
<div class="t" style="left:238.30px;top:502.91px;font-size:9.75px;line-height:9.75px;color:#777;font-weight:bold;">Name</div>
<div class="t" style="left:615.90px;top:502.91px;font-size:9.75px;line-height:9.75px;color:#777;font-weight:bold;">Person Responsible</div>
<div class="t" style="left:867.60px;top:502.91px;font-size:9.75px;line-height:9.75px;color:#777;font-weight:bold;">Due Date</div>
<div class="t" style="left:993.40px;top:502.91px;font-size:9.75px;line-height:9.75px;color:#777;font-weight:bold;">Status</div>
<div class="t" style="left:238.30px;top:528.01px;font-size:9.75px;line-height:9.75px;color:#5db84a;font-weight:normal;">Finalize the plan</div>
<div class="t" style="left:615.90px;top:528.01px;font-size:9.75px;line-height:9.75px;color:#555;font-weight:normal;">Florie Jarrin</div>
<div class="t" style="left:867.60px;top:528.01px;font-size:9.75px;line-height:9.75px;color:#555;font-weight:normal;">01/05/2016</div>
<div class="t" style="left:993.40px;top:528.01px;font-size:9.75px;line-height:9.75px;color:#555;font-weight:normal;">627 days</div>
<div style="position:absolute;left:1035.7px;top:527.00px;width:24.8px;height:13.7px;box-sizing:border-box;border:1.1px solid #f39078;border-radius:1px;color:#f06a4a;font:7.8px/11.4px 'Liberation Sans', sans-serif;letter-spacing:0.6px;text-indent:0.6px;text-align:center;background:#fff">late</div>
<div class="t" style="left:238.30px;top:555.21px;font-size:9.75px;line-height:9.75px;color:#5db84a;font-weight:normal;">Content integration</div>
<div class="t" style="left:615.90px;top:555.21px;font-size:9.75px;line-height:9.75px;color:#555;font-weight:normal;">Florie Jarrin</div>
<div class="t" style="left:867.60px;top:555.21px;font-size:9.75px;line-height:9.75px;color:#555;font-weight:normal;">04/05/2016</div>
<div class="t" style="left:993.40px;top:555.21px;font-size:9.75px;line-height:9.75px;color:#555;font-weight:normal;">624 days</div>
<div style="position:absolute;left:1035.7px;top:554.20px;width:24.8px;height:13.7px;box-sizing:border-box;border:1.1px solid #f39078;border-radius:1px;color:#f06a4a;font:7.8px/11.4px 'Liberation Sans', sans-serif;letter-spacing:0.6px;text-indent:0.6px;text-align:center;background:#fff">late</div>
<div class="t" style="left:238.30px;top:582.41px;font-size:9.75px;line-height:9.75px;color:#5db84a;font-weight:normal;">Client meetings</div>
<div class="t" style="left:615.90px;top:582.41px;font-size:9.75px;line-height:9.75px;color:#555;font-weight:normal;">Rachel Burger</div>
<div class="t" style="left:867.60px;top:582.41px;font-size:9.75px;line-height:9.75px;color:#555;font-weight:normal;">01/07/2016</div>
<div class="t" style="left:993.40px;top:582.41px;font-size:9.75px;line-height:9.75px;color:#555;font-weight:normal;">566 days</div>
<div style="position:absolute;left:1035.7px;top:581.40px;width:24.8px;height:13.7px;box-sizing:border-box;border:1.1px solid #f39078;border-radius:1px;color:#f06a4a;font:7.8px/11.4px 'Liberation Sans', sans-serif;letter-spacing:0.6px;text-indent:0.6px;text-align:center;background:#fff">late</div>
<div style="position:absolute;left:0.00px;top:592.00px;width:1139.00px;height:2.00px;background:#ee3c6b;"></div>
</div></body></html>
